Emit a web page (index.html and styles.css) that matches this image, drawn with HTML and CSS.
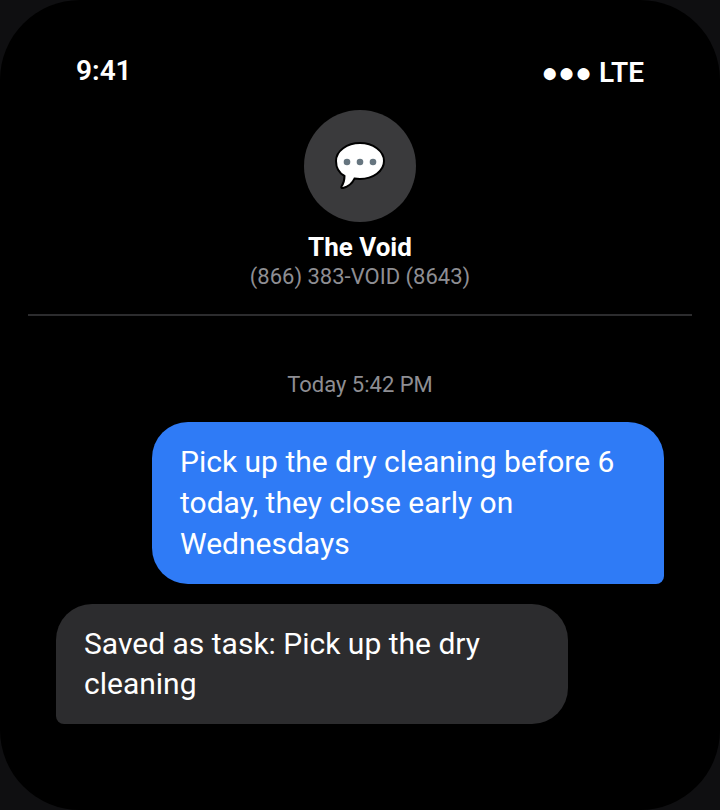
FILE: index.html
```html
<!DOCTYPE html>
<html lang="en">

<head>
    <meta charset="UTF-8">
    <meta name="viewport" content="width=device-width, initial-scale=1.0">
    <title>The Void</title>
    <link rel="stylesheet" href="styles.css">
</head>

<body>
    <div class="phone">
        <div class="status-bar">
            <span class="time">9:41</span>
            <span class="signal">●●● LTE</span>
        </div>

        <div class="contact">
            <div class="avatar">
                <svg class="avatar-icon" viewBox="0 0 52 52" width="52" height="52">
                    <path class="bubble-shape" d="M26 3C13 3 2 11 2 21C2 27.500 5 33 10.500 36C10.500 40 9.500 43.500 7.500 46.500C7 47.500 7.500 48.300 9 48C13 47 18 44 20.500 38.600C22.500 38.900 24 39 26 39C39 39 50 31 50 21C50 11 39 3 26 3Z"/>
                    <circle class="dot" cx="13" cy="22" r="3.300"/>
                    <circle class="dot" cx="26" cy="22" r="3.300"/>
                    <circle class="dot" cx="39" cy="22" r="3.300"/>
                </svg>
            </div>
            <div class="name">The Void</div>
            <div class="number">(866) 383-VOID (8643)</div>
        </div>

        <div class="messages">
            <div class="timestamp">Today 5:42 PM</div>
            <div class="message sent">Pick up the dry cleaning before 6 today, they close early on Wednesdays</div>
            <div class="message received">Saved as task: Pick up the dry cleaning</div>
        </div>
    </div>
</body>

</html>
```

FILE: styles.css
```css
* {
    box-sizing: border-box;
}

body {
    margin: 0;
    background-color: #0f0f11;
    font-family: Roboto, "Liberation Sans", sans-serif;
    color: #fff;
}

.phone {
    width: 720px;
    height: 810px;
    background: #000;
    border-radius: 80px;
}

.status-bar {
    display: flex;
    justify-content: space-between;
    padding: 53px 76px 0;
    height: 110px;
    font-weight: 600;
    font-size: 28px;
    line-height: 36px;
}

.signal {
    margin-top: 2px;
}

.contact {
    margin: 0 28px;
    padding-bottom: 24px;
    border-bottom: 2px solid #2c2c2e;
    display: flex;
    flex-direction: column;
    align-items: center;
}

.avatar {
    width: 112px;
    height: 112px;
    border-radius: 50%;
    background: #3a3a3c;
    display: flex;
    align-items: center;
    justify-content: center;
    margin-bottom: 8px;
}

.bubble-shape {
    fill: #fff;
    stroke: #000;
    stroke-width: 2;
}

.dot {
    fill: #66757f;
}

.name {
    font-size: 26px;
    font-weight: 700;
    line-height: 34px;
}

.number {
    font-size: 22px;
    line-height: 26px;
    color: #8e8e93;
}

.messages {
    padding: 56px 56px 0;
    display: flex;
    flex-direction: column;
    gap: 20px;
}

.timestamp {
    text-align: center;
    font-size: 22px;
    line-height: 26px;
    color: #8e8e93;
    margin-bottom: 4px;
}

.message {
    width: 512px;
    padding: 20px 28px;
    font-size: 30px;
    line-height: 40.800px;
    border-radius: 36px;
}

.sent {
    align-self: flex-end;
    background: #2f7bf6;
    border-bottom-right-radius: 8px;
}

.received {
    align-self: flex-start;
    background: #2c2c2e;
    border-bottom-left-radius: 8px;
    line-height: 40px;
}
```
